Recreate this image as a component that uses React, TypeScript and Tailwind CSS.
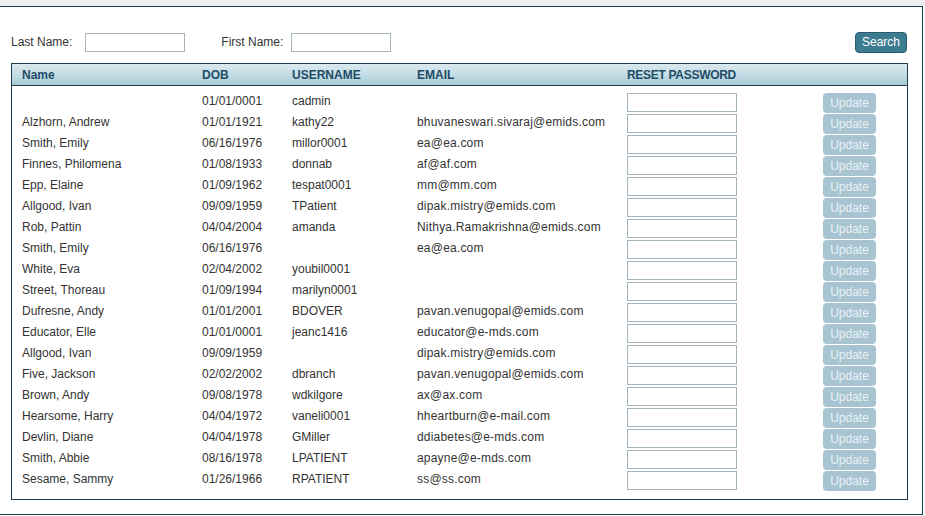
import React from 'react';

interface UserRow {
  name: string;
  dob: string;
  username: string;
  email: string;
}

const rows: UserRow[] = [
  { name: '', dob: '01/01/0001', username: 'cadmin', email: '' },
  { name: 'Alzhorn, Andrew', dob: '01/01/1921', username: 'kathy22', email: 'bhuvaneswari.sivaraj@emids.com' },
  { name: 'Smith, Emily', dob: '06/16/1976', username: 'millor0001', email: 'ea@ea.com' },
  { name: 'Finnes, Philomena', dob: '01/08/1933', username: 'donnab', email: 'af@af.com' },
  { name: 'Epp, Elaine', dob: '01/09/1962', username: 'tespat0001', email: 'mm@mm.com' },
  { name: 'Allgood, Ivan', dob: '09/09/1959', username: 'TPatient', email: 'dipak.mistry@emids.com' },
  { name: 'Rob, Pattin', dob: '04/04/2004', username: 'amanda', email: 'Nithya.Ramakrishna@emids.com' },
  { name: 'Smith, Emily', dob: '06/16/1976', username: '', email: 'ea@ea.com' },
  { name: 'White, Eva', dob: '02/04/2002', username: 'youbil0001', email: '' },
  { name: 'Street, Thoreau', dob: '01/09/1994', username: 'marilyn0001', email: '' },
  { name: 'Dufresne, Andy', dob: '01/01/2001', username: 'BDOVER', email: 'pavan.venugopal@emids.com' },
  { name: 'Educator, Elle', dob: '01/01/0001', username: 'jeanc1416', email: 'educator@e-mds.com' },
  { name: 'Allgood, Ivan', dob: '09/09/1959', username: '', email: 'dipak.mistry@emids.com' },
  { name: 'Five, Jackson', dob: '02/02/2002', username: 'dbranch', email: 'pavan.venugopal@emids.com' },
  { name: 'Brown, Andy', dob: '09/08/1978', username: 'wdkilgore', email: 'ax@ax.com' },
  { name: 'Hearsome, Harry', dob: '04/04/1972', username: 'vaneli0001', email: 'hheartburn@e-mail.com' },
  { name: 'Devlin, Diane', dob: '04/04/1978', username: 'GMiller', email: 'ddiabetes@e-mds.com' },
  { name: 'Smith, Abbie', dob: '08/16/1978', username: 'LPATIENT', email: 'apayne@e-mds.com' },
  { name: 'Sesame, Sammy', dob: '01/26/1966', username: 'RPATIENT', email: 'ss@ss.com' },
];

const cols = 'grid grid-cols-[180px_90px_125px_210px_196px_52px] pl-[10px]';

export default function App() {
  return (
    <div className="w-[925px] h-[516px] bg-[#f7fcfe] font-['Liberation_Sans',Arial,sans-serif] text-[12px] text-[#333] overflow-hidden">
      <div className="h-[6px] bg-[#efefef]" />

      {/* Panel */}
      <div className="w-[923px] h-[509px] border-t border-r border-b border-[#1d3c4c] bg-white pl-[11px] pt-[25px]">
        {/* Search bar */}
        <div className="flex items-center h-[20px] w-[896px]">
          <span className="mr-[13px]">Last Name:</span>
          <input className="w-[100px] h-[19px] border border-[#a7b5bd] bg-white outline-none" />
          <span className="ml-[36px] mr-[8px]">First Name:</span>
          <input className="w-[100px] h-[19px] border border-[#a7b5bd] bg-white outline-none" />
          <button className="ml-auto w-[52px] h-[21px] rounded-[4px] border border-[#2b5d72] bg-[#3d7b91] text-white text-[12px] leading-none">
            Search
          </button>
        </div>

        {/* Results table */}
        <div className="mt-[11px] w-[897px] h-[437px] border border-[#1d3c4c]">
          <div className={`${cols} h-[22px] items-center border-b border-[#1d3c4c] bg-gradient-to-b from-[#dae9ee] via-[#c5dde6] to-[#a7cad7] font-bold text-[#1d4c66]`}>
            <span>Name</span>
            <span>DOB</span>
            <span>USERNAME</span>
            <span>EMAIL</span>
            <span className="tracking-[-0.3px]">RESET PASSWORD</span>
            <span />
          </div>

          <div className="pt-[4px]">
            {rows.map((r, i) => (
              <div key={i} className={`${cols} h-[21px] items-start leading-[18px]`}>
                <span className="pt-[2px]">{r.name}</span>
                <span className="pt-[2px]">{r.dob}</span>
                <span className="pt-[2px]">{r.username}</span>
                <span className="pt-[2px] tracking-[0.2px]">{r.email}</span>
                <span>
                  <input className="block mt-[3px] w-[110px] h-[19px] border border-[#a3b3bb] bg-white outline-none" />
                </span>
                <button className="mt-[3px] w-[53px] h-[20px] rounded-[4px] bg-[#a7c4d0] text-[#e9f2f6] text-[12px] leading-none">
                  Update
                </button>
              </div>
            ))}
          </div>
        </div>
      </div>
    </div>
  );
}
